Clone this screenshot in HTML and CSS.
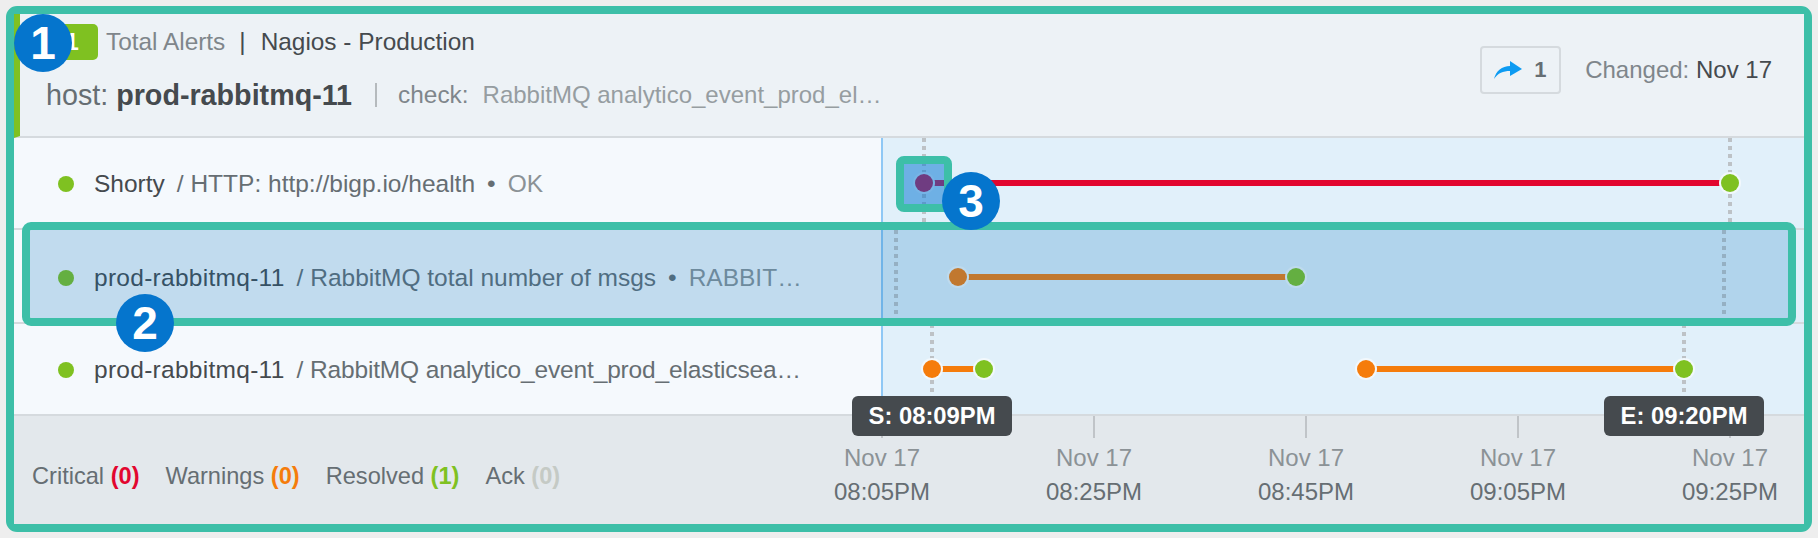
FILE: index.html
```html
<!DOCTYPE html>
<html>
<head>
  <title>Alert Timeline</title>
  <link rel="stylesheet" href="styles.css">
</head>
<body>
  <div class="card">

    <div class="alert-header">
      <div class="header-left">
        <div class="header-line">
          <span class="badge">1</span>
          <span class="muted">Total Alerts</span>
          <span class="pipe">|</span>
          <span class="source">Nagios - Production</span>
        </div>
        <div class="header-line host-line">
          <span class="host">host: <b>prod-rabbitmq-11</b></span>
          <span class="thin-pipe"></span>
          <span class="check">check:</span>
          <span class="check-value">RabbitMQ analytico_event_prod_el…</span>
        </div>
      </div>
      <div class="header-right">
        <div class="share-btn">
          <svg width="28" height="18" viewBox="0 0 28 18"><path fill="#0d9bf2" d="M0 18C2 10 8 5 16 5V0L28 8L16 15V10C9 10 4 12 0 18Z"/></svg>
          <b>1</b>
        </div>
        <div class="changed"><span class="muted">Changed:</span> Nov 17</div>
      </div>
    </div>

    <div class="row row-first">
      <div class="row-label">
        <span class="status green"></span>
        <span class="name">Shorty</span>
        <span class="path">/ HTTP: http://bigp.io/health</span>
        <span class="path">•</span>
        <span class="state">OK</span>
      </div>
      <div class="track">
        <div class="guide" style="left:39px"></div>
        <div class="guide" style="left:845px"></div>
        <div class="span" style="left:41px;width:806px">
          <i class="bar red"></i><i class="point start red"></i><i class="point end green"></i>
        </div>
      </div>
    </div>

    <div class="row row-middle">
      <div class="row-label">
        <span class="status green"></span>
        <span class="name host-name">prod-rabbitmq-11</span>
        <span class="path">/ RabbitMQ total number of msgs</span>
        <span class="path">•</span>
        <span class="state">RABBIT…</span>
      </div>
      <div class="track">
        <div class="guide" style="left:11px"></div>
        <div class="guide" style="left:839px"></div>
        <div class="span" style="left:75px;width:338px">
          <i class="bar orange"></i><i class="point start orange"></i><i class="point end green"></i>
        </div>
      </div>
    </div>

    <div class="row row-last">
      <div class="row-label">
        <span class="status green"></span>
        <span class="name host-name">prod-rabbitmq-11</span>
        <span class="path long-path">/ RabbitMQ analytico_event_prod_elasticsea…</span>
      </div>
      <div class="track">
        <div class="guide" style="left:47px"></div>
        <div class="guide" style="left:799px"></div>
        <div class="span" style="left:49px;width:52px">
          <i class="bar orange"></i><i class="point start orange"></i><i class="point end green"></i>
        </div>
        <div class="span" style="left:483px;width:318px">
          <i class="bar orange"></i><i class="point start orange"></i><i class="point end green"></i>
        </div>
      </div>
    </div>

    <div class="alert-footer">
      <div class="legend">
        <span>Critical <b class="c-critical">(0)</b></span>
        <span>Warnings <b class="c-warning">(0)</b></span>
        <span>Resolved <b class="c-resolved">(1)</b></span>
        <span>Ack <b class="c-ack">(0)</b></span>
      </div>
      <div class="axis">
        <div class="tick"><i></i><span class="tick-date">Nov 17</span><span>08:05PM</span></div>
        <div class="tick"><i></i><span class="tick-date">Nov 17</span><span>08:25PM</span></div>
        <div class="tick"><i></i><span class="tick-date">Nov 17</span><span>08:45PM</span></div>
        <div class="tick"><i></i><span class="tick-date">Nov 17</span><span>09:05PM</span></div>
        <div class="tick"><i></i><span class="tick-date">Nov 17</span><span>09:25PM</span></div>
      </div>
    </div>

    <!-- tooltips over the timeline -->
    <div class="time-tip tip-start">S: 08:09PM</div>
    <div class="time-tip tip-end">E: 09:20PM</div>

    <!-- callouts -->
    <div class="mark-row"></div>
    <div class="mark-point"></div>
    <div class="callout call-1">1</div>
    <div class="callout call-2">2</div>
    <div class="callout call-3">3</div>
  </div>
</body>
</html>
```

FILE: styles.css
```css
* {
  box-sizing: border-box;
}

body {
  margin: 0;
  padding: 6px;
  background-color: #eeeeee;
  font-family: "Liberation Sans", Arial, sans-serif;
  font-size: 23.6px;
  color: #454a4e;
}

.card {
  position: relative;
  width: 1806px;
  height: 526px;
  border: 8px solid #3dbfa8;
  border-radius: 11px;
  background-color: #e3e8ec;
  display: flex;
  flex-direction: column;
}

.muted {
  color: #7f868b;
}

/* header */
.alert-header {
  height: 124px;
  flex: none;
  display: flex;
  justify-content: space-between;
  align-items: flex-start;
  padding: 10px 32px 0 26px;
  background-color: #edf2f6;
  border-left: 6px solid #7fc121;
  border-bottom: 2px solid #d5dade;
  font-size: 24.4px;
}

.header-line {
  height: 36px;
  display: flex;
  align-items: center;
}

.host-line {
  margin-top: 17px;
}

.badge {
  width: 52px;
  height: 36px;
  margin-right: 8px;
  border-radius: 5px;
  background-color: #7fc121;
  color: #fff;
  font-weight: bold;
  text-align: center;
  line-height: 36px;
}

.pipe {
  margin: 0 15px 0 14px;
}

.host {
  font-size: 28.7px;
  color: #666e73;
}

.host b {
  color: #454a4e;
}

.thin-pipe {
  width: 2px;
  height: 24px;
  margin: 0 21px 0 23px;
  background-color: #b5babd;
}

.check {
  color: #7f868b;
  margin-right: 14px;
}

.check-value {
  font-size: 24px;
  color: #969da1;
}

.header-right {
  display: flex;
  align-items: center;
  gap: 24px;
  margin-top: 22px;
}

.share-btn {
  width: 81px;
  height: 48px;
  display: flex;
  align-items: center;
  gap: 12px;
  padding-left: 12px;
  border: 2px solid #d5dade;
  border-radius: 4px;
  font-size: 22px;
  color: #666e73;
}

.changed {
  font-size: 24px;
}

/* rows */
.row {
  flex: none;
  display: flex;
  background-color: #f5f9fd;
  border-bottom: 2px solid #d5dade;
}

.row-first {
  height: 92px;
}

.row-middle {
  height: 94px;
}

.row-last {
  height: 92px;
}

.row-label {
  width: 867px;
  flex: none;
  display: flex;
  align-items: center;
  gap: 12px;
  padding: 2px 0 0 44px;
  font-size: 24.5px;
  white-space: nowrap;
}

.row-middle .row-label {
  padding-top: 4px;
}

.row-middle .span {
  margin-top: 1px;
}

.host-name {
  letter-spacing: 0.28px;
}

.path {
  color: #666e73;
}

.long-path {
  letter-spacing: -0.15px;
}

.state {
  color: #8b9296;
}

.status {
  width: 16px;
  height: 16px;
  margin-right: 8px;
  border-radius: 50%;
}

.track {
  position: relative;
  flex: 1;
  background-color: #e1f0fa;
  border-left: 2px solid #8fc8f5;
}

.guide {
  position: absolute;
  top: 0;
  bottom: 0;
  width: 4px;
  background-image: repeating-linear-gradient(to bottom, #bdc2c6 0, #bdc2c6 4px, transparent 4px, transparent 8px);
}

.span {
  position: absolute;
  top: 50%;
  height: 0;
}

.bar {
  position: absolute;
  left: 0;
  right: 0;
  top: -3px;
  height: 6px;
}

.point {
  position: absolute;
  top: -9px;
  width: 18px;
  height: 18px;
  border-radius: 50%;
  box-shadow: 0 0 0 2px #f2f8fc;
}

.point.start {
  left: -9px;
}

.point.end {
  right: -9px;
}

.red {
  background-color: #e2062f;
}

.orange {
  background-color: #f57c0b;
}

.green {
  background-color: #7fc121;
}

/* footer */
.alert-footer {
  flex: 1;
  position: relative;
  display: flex;
  background-color: #e3e8ec;
}

.legend {
  display: flex;
  align-items: center;
  gap: 26px;
  height: 100%;
  padding: 12px 0 0 18px;
  color: #666e73;
}

.c-critical {
  color: #e2062f;
}

.c-warning {
  color: #f57c0b;
}

.c-resolved {
  color: #7fc121;
}

.c-ack {
  color: #c5cac5;
}

.axis {
  position: absolute;
  left: 868px;
  width: 848px;
  top: 0;
  display: flex;
  justify-content: space-between;
  font-size: 24px;
}

.tick {
  width: 0;
  display: flex;
  flex-direction: column;
  align-items: center;
  line-height: 34px;
  white-space: nowrap;
  color: #666e73;
}

.tick i {
  flex: none;
  width: 2px;
  height: 22px;
  margin-bottom: 3px;
  background-color: #c0c4c8;
}

.tick-date {
  color: #8b9296;
}

.time-tip {
  position: absolute;
  top: 382px;
  width: 160px;
  height: 40px;
  border-radius: 6px;
  background-color: #454a4e;
  color: #fff;
  font-size: 23.8px;
  font-weight: bold;
  text-align: center;
  line-height: 40px;
}

.tip-start {
  left: 838px;
}

.tip-end {
  left: 1590px;
}

/* callouts */
.mark-row {
  position: absolute;
  left: 8px;
  top: 208px;
  width: 1774px;
  height: 104px;
  border: 8px solid #3dbfa8;
  border-radius: 9px;
  background-color: rgba(0, 108, 185, 0.21);
  background-clip: padding-box;
}

.mark-point {
  position: absolute;
  left: 882px;
  top: 142px;
  width: 56px;
  height: 56px;
  border: 8px solid #3dbfa8;
  border-radius: 8px;
  background-color: rgba(0, 114, 207, 0.51);
  background-clip: padding-box;
}

.callout {
  position: absolute;
  width: 58px;
  height: 58px;
  border-radius: 50%;
  background-color: #0575cd;
  color: #fff;
  font-size: 46px;
  font-weight: bold;
  text-align: center;
  line-height: 58px;
}

.call-1 {
  left: 0;
  top: 0;
}

.call-2 {
  left: 102px;
  top: 280px;
}

.call-3 {
  left: 928px;
  top: 158px;
}
```
